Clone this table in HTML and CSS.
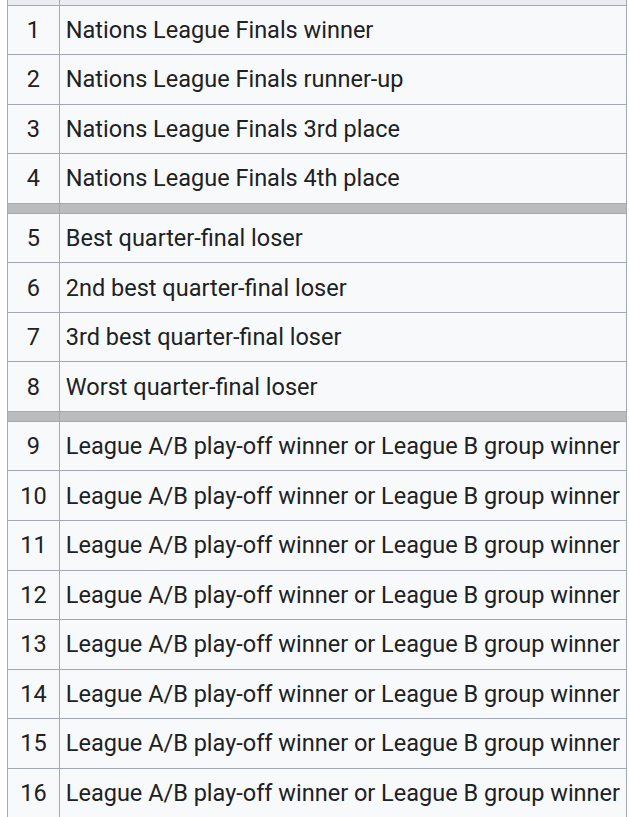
FILE: index.html
```html
<!DOCTYPE html>
<html>
<head>
<meta charset="utf-8">
<link rel="stylesheet" href="styles.css">
</head>
<body>
<table class="seed">
  <tr class="head"><th></th><th></th></tr>
  <tr><td class="num">1</td><td class="desc">Nations League Finals winner</td></tr>
  <tr><td class="num">2</td><td class="desc">Nations League Finals runner-up</td></tr>
  <tr><td class="num">3</td><td class="desc">Nations League Finals 3rd place</td></tr>
  <tr><td class="num">4</td><td class="desc">Nations League Finals 4th place</td></tr>
  <tr class="sep"><td></td><td></td></tr>
  <tr><td class="num">5</td><td class="desc">Best quarter-final loser</td></tr>
  <tr><td class="num">6</td><td class="desc">2nd best quarter-final loser</td></tr>
  <tr><td class="num">7</td><td class="desc">3rd best quarter-final loser</td></tr>
  <tr><td class="num">8</td><td class="desc">Worst quarter-final loser</td></tr>
  <tr class="sep"><td></td><td></td></tr>
  <tr><td class="num">9</td><td class="desc">League A/B play-off winner or League B group winner</td></tr>
  <tr><td class="num">10</td><td class="desc">League A/B play-off winner or League B group winner</td></tr>
  <tr><td class="num">11</td><td class="desc">League A/B play-off winner or League B group winner</td></tr>
  <tr><td class="num">12</td><td class="desc">League A/B play-off winner or League B group winner</td></tr>
  <tr><td class="num">13</td><td class="desc">League A/B play-off winner or League B group winner</td></tr>
  <tr><td class="num">14</td><td class="desc">League A/B play-off winner or League B group winner</td></tr>
  <tr><td class="num">15</td><td class="desc">League A/B play-off winner or League B group winner</td></tr>
  <tr><td class="num">16</td><td class="desc">League A/B play-off winner or League B group winner</td></tr>
</table>
</body>
</html>
```
FILE: styles.css
```css
html, body {
  margin: 0;
  padding: 0;
  background: #ffffff;
}
body {
  padding-left: 7px;
  font-family: Roboto, "Noto Sans", sans-serif;
  color: #202122;
}
.seed {
  border-collapse: collapse;
  background: #f8f9fa;
  width: 620px;
  font-size: 23.5px;
}
.seed td, .seed th {
  border: 1px solid #a2a9b1;
  padding: 0 6px;
  height: 49.55px;
  box-sizing: border-box;
}
.seed .head th {
  height: 5px;
  background: #eaecf0;
  border-top: none;
  padding: 0;
}
.seed .num {
  width: 52px;
  text-align: center;
  padding: 0;
}
.seed .desc {
  text-align: left;
  white-space: nowrap;
}
.seed .sep td {
  height: 10px;
  padding: 0;
  background: #bbbcbd;
}
```
